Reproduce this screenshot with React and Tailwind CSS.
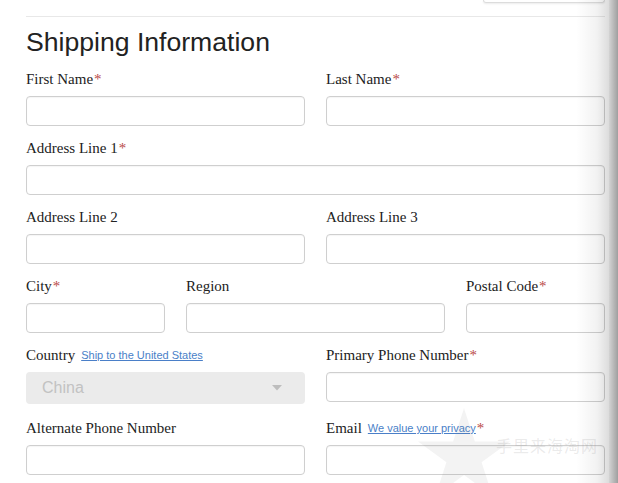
import React from 'react';

const serif = { fontFamily: '"Liberation Serif", "Times New Roman", serif' };

const Req = () => <span className="text-[#b94a48] ml-[1px]">*</span>;

const Label = ({ children, required }) => (
    <label className="block h-[20px] leading-[20px] text-[15px] text-[#222] mb-[7px]" style={serif}>
        {children}
        {required && <Req />}
    </label>
);

const Input = () => (
    <input
        type="text"
        className="block w-full h-[30px] rounded-[4px] border border-[#cfcfcf] bg-white shadow-[inset_0_1px_1px_rgba(0,0,0,0.04)] outline-none"
    />
);

const Field = ({ label, required, extra }) => (
    <div className="mb-[12px]">
        <Label required={required}>
            {label}
            {extra}
        </Label>
        <Input />
    </div>
);

const InlineLink = ({ children }) => (
    <a
        href="#"
        className="ml-[6px] text-[11px] text-[#4a7fc8] underline font-['Liberation_Sans',Arial,sans-serif] align-[1px]"
    >
        {children}
    </a>
);

const App = () => {
    return (
        <div className="relative w-[618px] h-[483px] overflow-hidden bg-white">
            <div className="pl-[26px] pr-[13px]">
                {/* cropped button at the very top */}
                <div className="flex justify-end">
                    <div className="w-[122px] h-[3px] border border-t-0 border-[#dcdcdc] rounded-b-[3px] shadow-[0_1px_2px_rgba(0,0,0,0.08)]" />
                </div>
                <div className="mt-[13px] border-t border-[#e8e8e8]" />

                <h2 className="mt-[10px] mb-[12px] h-[30px] leading-[30px] text-[26.6px] text-[#222] font-['Liberation_Sans',Arial,sans-serif]">
                    Shipping Information
                </h2>

                <div className="grid grid-cols-2 gap-x-[21px]">
                    <Field label="First Name" required />
                    <Field label="Last Name" required />
                </div>

                <Field label="Address Line 1" required />

                <div className="grid grid-cols-2 gap-x-[21px]">
                    <Field label="Address Line 2" />
                    <Field label="Address Line 3" />
                </div>

                <div className="grid grid-cols-[139px_1fr_139px] gap-x-[21px]">
                    <Field label="City" required />
                    <Field label="Region" />
                    <Field label="Postal Code" required />
                </div>

                <div className="grid grid-cols-2 gap-x-[21px]">
                    <div className="mb-[14px]">
                        <Label>
                            Country
                            <InlineLink>Ship to the United States</InlineLink>
                        </Label>
                        <div className="flex items-center justify-between h-[32px] rounded-[4px] bg-[#ebebeb] pl-[16px] pr-[23px]">
                            <span className="text-[16px] text-[#c2c2c2] font-['Liberation_Sans',Arial,sans-serif]">China</span>
                            <svg width="10" height="6" viewBox="0 0 10 6">
                                <path d="M0 0 H10 L5 5.5 Z" fill="#bdbdbd" />
                            </svg>
                        </div>
                    </div>
                    <Field label="Primary Phone Number" required />
                </div>

                <div className="grid grid-cols-2 gap-x-[21px]">
                    <Field label="Alternate Phone Number" />
                    <Field
                        label="Email"
                        extra={<InlineLink>We value your privacy</InlineLink>}
                        required
                    />
                </div>
            </div>

            {/* watermark */}
            <div className="absolute left-[418px] top-[408px] pointer-events-none">
                <svg width="92" height="88" viewBox="0 0 100 95">
                    <path
                        d="M50 0 L61.8 36.2 L100 36.2 L69.1 58.6 L80.9 95 L50 72.6 L19.1 95 L30.9 58.6 L0 36.2 L38.2 36.2 Z"
                        fill="rgba(120,120,120,0.09)"
                    />
                </svg>
            </div>
            <div className="absolute left-[496px] top-[433px] text-[16px] tracking-[1px] text-[rgba(150,150,150,0.2)] pointer-events-none font-['Noto_Sans_CJK_SC',sans-serif]">
                手里来海淘网
            </div>

            {/* page edge shadow */}
            <div className="absolute right-0 top-0 h-full w-[42px] pointer-events-none bg-gradient-to-r from-[rgba(0,0,0,0)] via-[rgba(0,0,0,0.05)] to-[rgba(0,0,0,0.2)]" />
            <div className="absolute right-0 top-0 h-full w-[9px] pointer-events-none bg-gradient-to-r from-[rgba(0,0,0,0.04)] to-[rgba(0,0,0,0.22)]" />
        </div>
    );
};

export default App;
